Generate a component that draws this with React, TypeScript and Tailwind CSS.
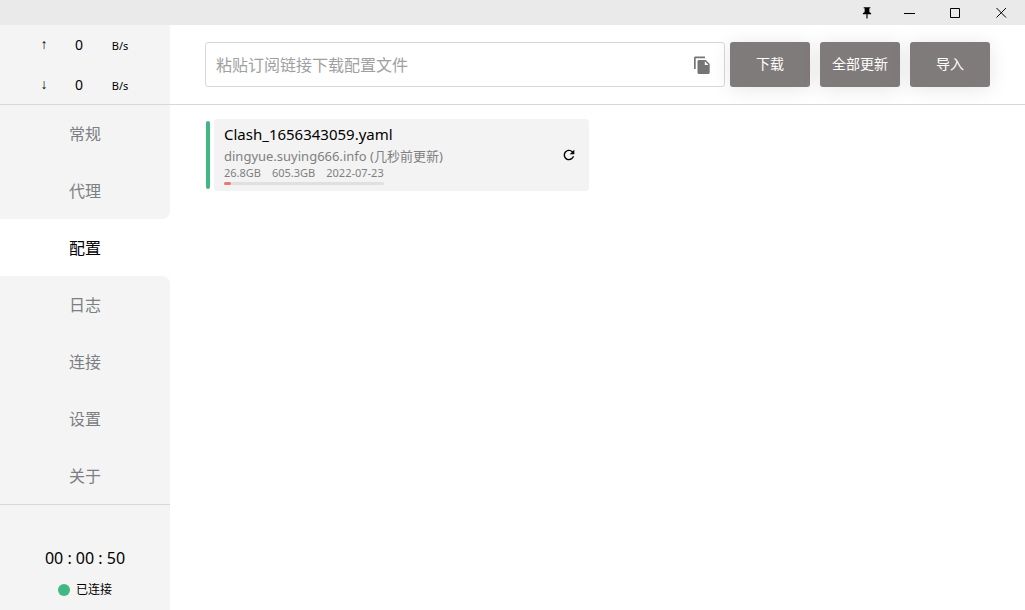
import { useState } from 'react';
import { MdPushPin, MdRefresh } from 'react-icons/md';

interface Profile {
  name: string;
  host: string;
  updated: string;
  used: string;
  total: string;
  expires: string;
  percent: number;
}

const menus = ['常规', '代理', '配置', '日志', '连接', '设置', '关于'];

const profiles: Profile[] = [
  {
    name: 'Clash_1656343059.yaml',
    host: 'dingyue.suying666.info',
    updated: '几秒前更新',
    used: '26.8GB',
    total: '605.3GB',
    expires: '2022-07-23',
    percent: 4.4,
  },
];

function TitleBar() {
  return (
    <header className="flex h-[25px] shrink-0 items-center justify-end bg-[#eaeaea] pr-px text-black">
      <button aria-label="置顶" className="flex h-full w-[38px] items-center justify-center">
        <MdPushPin className="size-[14px]" />
      </button>
      <button aria-label="最小化" className="flex h-full w-[46px] items-center justify-center">
        <svg className="size-[11px]" viewBox="0 0 11 11" stroke="currentColor">
          <path d="M0 6.5h11" />
        </svg>
      </button>
      <button aria-label="最大化" className="flex h-full w-[46px] items-center justify-center">
        <svg className="size-[11px]" viewBox="0 0 11 11" fill="none" stroke="currentColor">
          <path d="M.5 1.5h9v9h-9z" />
        </svg>
      </button>
      <button aria-label="关闭" className="flex h-full w-[46px] items-center justify-center">
        <svg className="size-[11px]" viewBox="0 0 11 11" stroke="currentColor">
          <path d="M.5 1l9.5 9.5M10 1L.5 10.5" />
        </svg>
      </button>
    </header>
  );
}

function PasteIcon() {
  return (
    <svg className="size-[18px]" viewBox="0 0 18 18" fill="currentColor">
      <path d="M12 .5H2.5C1.7.5 1 1.2 1 2v11h1.7V2.2H12z" />
      <path
        fillRule="evenodd"
        d="M12.8 4H6c-.9 0-1.5.6-1.5 1.5v11c0 .9.6 1.5 1.5 1.5h9.2c.9 0 1.5-.6 1.5-1.5V8zm-1 1.2L15.5 9h-3.7z"
      />
    </svg>
  );
}

function TrafficRow({ arrow, value }: { arrow: string; value: number }) {
  return (
    <div className="flex h-10 items-center px-7 text-black">
      <span className="w-8 text-center font-['Liberation_Mono'] text-sm">{arrow}</span>
      <span className="w-[38px] text-center text-sm">{value}</span>
      <span className="flex-1 pt-[2px] text-center text-[11px]">B/s</span>
    </div>
  );
}

function ProfileCard({ profile, active }: { profile: Profile; active: boolean }) {
  return (
    <div className="flex items-center px-px">
      <div className={`h-[68px] w-1 rounded-sm ${active ? 'bg-[#41b883]' : 'bg-transparent'}`} />
      <div className="ml-1 flex h-[72px] flex-1 items-center justify-between rounded-sm bg-[#f3f3f3] pr-3 pl-[10px]">
        <div className="pb-1">
          <h2 className="text-[15px] leading-6 text-black">{profile.name}</h2>
          <p className="text-[13px] leading-5 text-[#808080]">
            {profile.host} ({profile.updated})
          </p>
          <div className="w-fit">
            <div className="flex gap-[11px] text-[11px] leading-[14px] text-[#808080]">
              <span>{profile.used}</span>
              <span>{profile.total}</span>
              <span>{profile.expires}</span>
            </div>
            <div className="mt-[2px] h-[3px] rounded-full bg-[#e0e0e0]">
              <div className="h-full rounded-full bg-[#f27573]" style={{ width: `${profile.percent}%` }} />
            </div>
          </div>
        </div>
        <button aria-label="更新" className="text-black">
          <MdRefresh className="size-4" />
        </button>
      </div>
    </div>
  );
}

export default function App() {
  const [current, setCurrent] = useState('配置');
  const [url, setUrl] = useState('');

  return (
    <div className="flex h-screen flex-col bg-white font-['Noto_Sans','Noto_Sans_CJK_SC',sans-serif]">
      <TitleBar />
      <div className="flex min-h-0 flex-1">
        <aside className="flex w-[170px] shrink-0 flex-col">
          <div className="h-20 border-b border-[#d8d8d8] bg-[#f4f4f4]">
            <TrafficRow arrow="↑" value={0} />
            <TrafficRow arrow="↓" value={0} />
          </div>
          <nav className="flex flex-col bg-white">
            {menus.map((menu, i) => (
              <button
                key={menu}
                onClick={() => setCurrent(menu)}
                className={`h-[57px] text-base ${
                  menu === current ? 'bg-white text-black' : 'bg-[#f4f4f4] text-[#7b7f83]'
                } ${menus[i + 1] === current ? 'rounded-br-lg' : ''} ${
                  menus[i - 1] === current ? 'rounded-tr-lg' : ''
                }`}
              >
                {menu}
              </button>
            ))}
          </nav>
          <div className="flex flex-1 flex-col items-center justify-end border-t border-[#d8d8d8] bg-[#f4f4f4] pb-[10px] text-black">
            <div className="text-base leading-6">00 : 00 : 50</div>
            <div className="mt-[10px] flex items-center gap-[6px] text-xs leading-5">
              <span className="size-3 rounded-full bg-[#41b883]" />
              已连接
            </div>
          </div>
        </aside>

        <main className="flex min-w-0 flex-1 flex-col">
          {/* Download bar */}
          <div className="flex h-20 shrink-0 items-center gap-[10px] border-b border-[#d8d8d8] px-[35px]">
            <div className="-mr-[5px] flex h-[45px] flex-1 items-center rounded-[3px] border border-[#d8d8d8] pr-[13px] pl-[10px]">
              <input
                aria-label="订阅链接"
                value={url}
                onChange={(e) => setUrl(e.target.value)}
                placeholder="粘贴订阅链接下载配置文件"
                className="min-w-0 flex-1 text-base text-black outline-none placeholder:text-[#a0a0a0]"
              />
              <button aria-label="粘贴" className="text-[#757575]">
                <PasteIcon />
              </button>
            </div>
            {['下载', '全部更新', '导入'].map((label) => (
              <button
                key={label}
                className="h-[45px] w-20 rounded-[3px] bg-[#807b7b] pb-[2px] text-sm text-white shadow-[0_2px_20px_rgba(0,0,0,0.1)]"
              >
                {label}
              </button>
            ))}
          </div>

          <div className="grid grid-cols-2 gap-[15px] px-[35px] py-[14px]">
            {profiles.map((profile) => (
              <ProfileCard key={profile.name} profile={profile} active />
            ))}
          </div>
        </main>
      </div>
    </div>
  );
}
